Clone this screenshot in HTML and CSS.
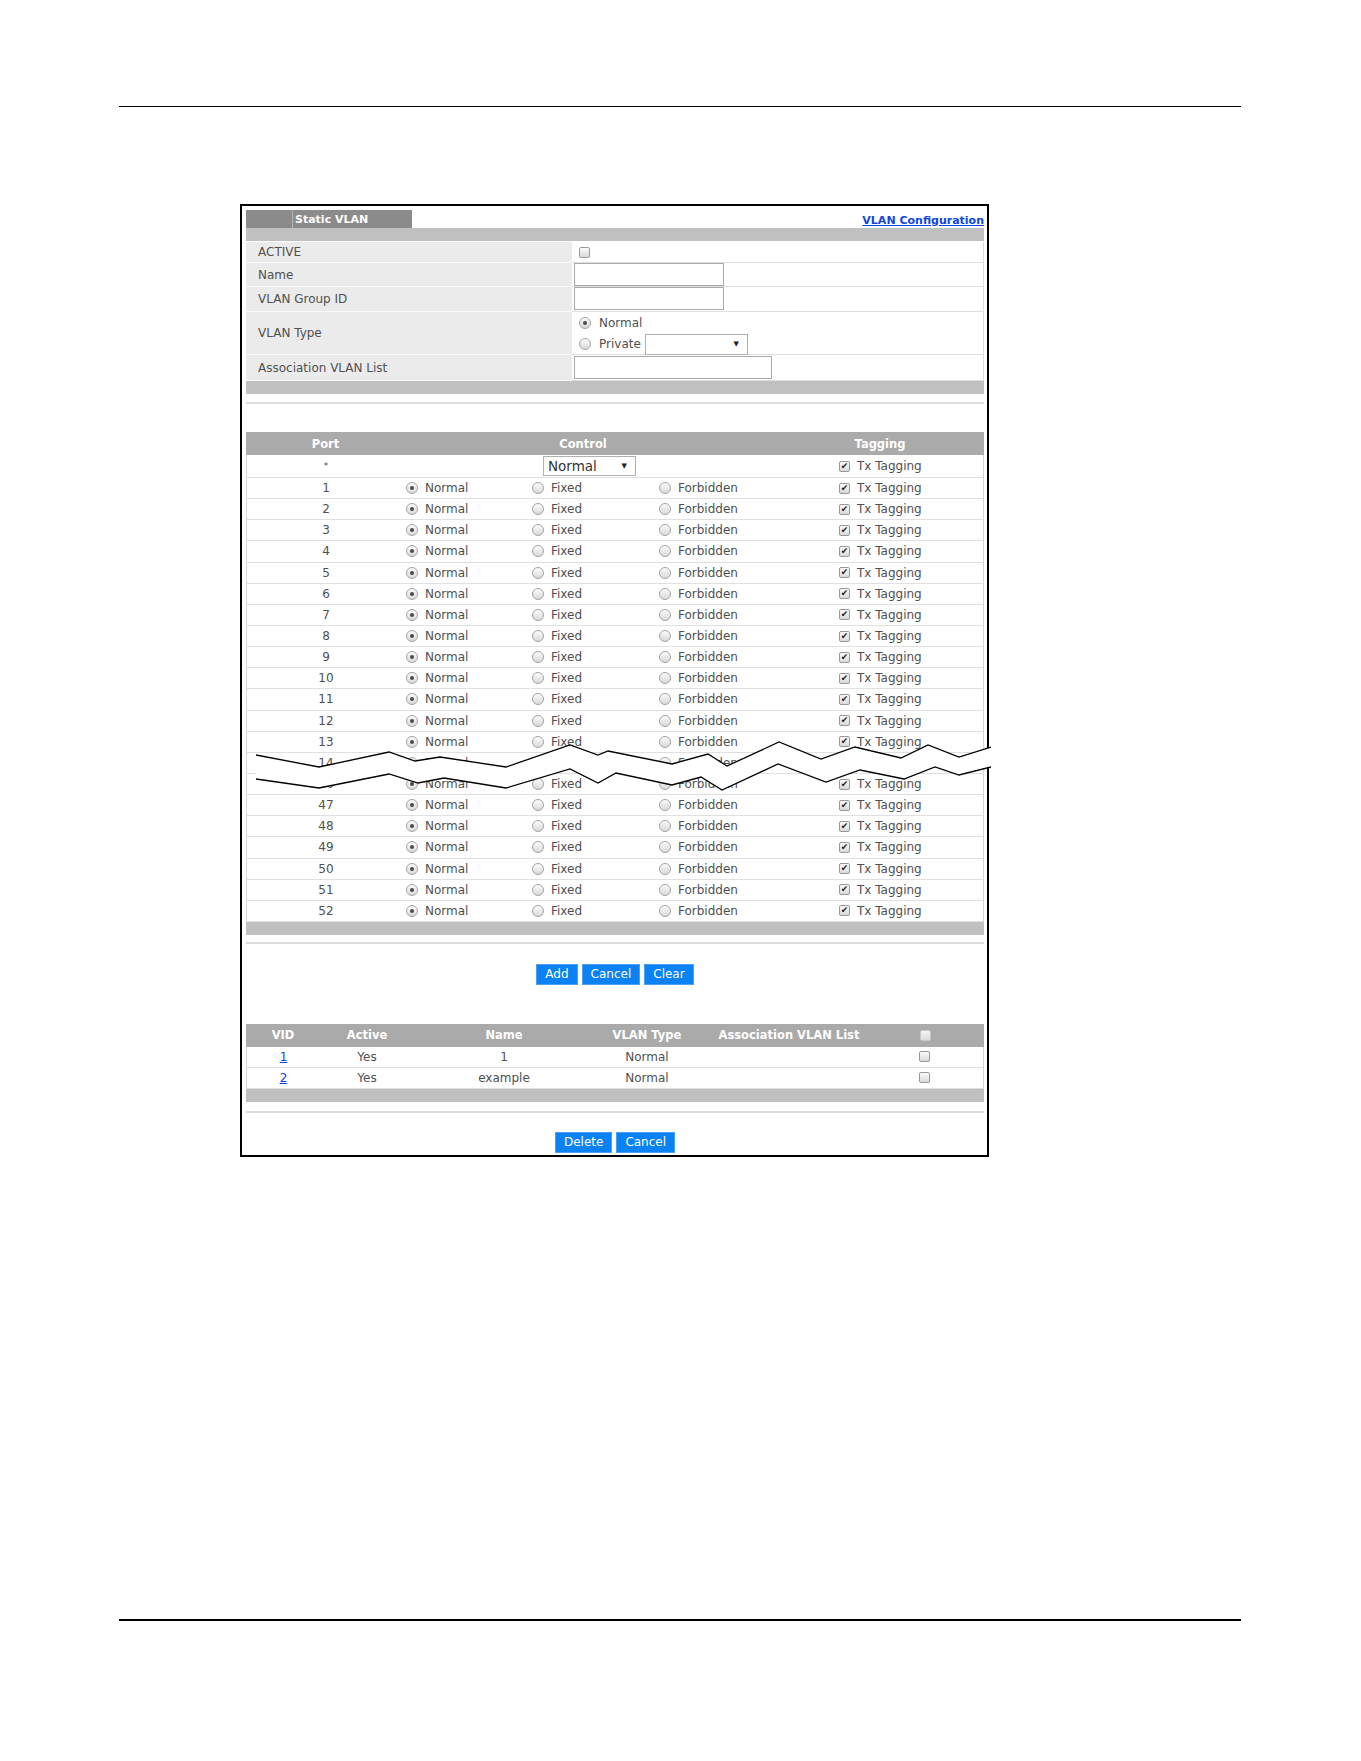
FILE: index.html
```html
<!DOCTYPE html>
<html>
<head>
  <meta charset="utf-8">
  <title>Static VLAN</title>
  <link rel="stylesheet" href="styles.css">
</head>
<body>
  <div class="rule rule-top"></div>

  <div class="panel">
    <div class="title-row">
      <div class="tab"><span>Static VLAN</span></div>
      <a class="link link-bold" href="#">VLAN Configuration</a>
    </div>
    <div class="bar"></div>

    <!-- VLAN settings -->
    <div class="form">
      <div class="lbl">ACTIVE</div>
      <div class="val"><i class="check"></i></div>

      <div class="lbl">Name</div>
      <div class="val top"><input class="text" type="text"></div>

      <div class="lbl">VLAN Group ID</div>
      <div class="val top"><input class="text" type="text"></div>

      <div class="lbl">VLAN Type</div>
      <div class="val types">
        <div class="type-line"><i class="radio on"></i><span>Normal</span></div>
        <div class="type-line"><i class="radio"></i><span>Private</span><span class="select select-private"></span></div>
      </div>

      <div class="lbl">Association VLAN List</div>
      <div class="val"><input class="text text-wide" type="text"></div>
    </div>
    <div class="bar"></div>
    <div class="sep sep-first"></div>

    <!-- Port membership -->
    <div class="ports">
      <div class="phead">
        <span>Port</span>
        <span>Control</span>
        <span class="tag-head">Tagging</span>
      </div>
      <div class="prow star">
        <span class="pnum">*</span><span></span>
        <span><span class="select select-all">Normal</span></span><span></span>
        <label class="opt"><i class="check on"></i>Tx Tagging</label>
      </div>
      <div class="prow"><span class="pnum">1</span><label class="opt"><i class="radio on"></i>Normal</label><label class="opt"><i class="radio"></i>Fixed</label><label class="opt"><i class="radio"></i>Forbidden</label><label class="opt"><i class="check on"></i>Tx Tagging</label></div>
      <div class="prow"><span class="pnum">2</span><label class="opt"><i class="radio on"></i>Normal</label><label class="opt"><i class="radio"></i>Fixed</label><label class="opt"><i class="radio"></i>Forbidden</label><label class="opt"><i class="check on"></i>Tx Tagging</label></div>
      <div class="prow"><span class="pnum">3</span><label class="opt"><i class="radio on"></i>Normal</label><label class="opt"><i class="radio"></i>Fixed</label><label class="opt"><i class="radio"></i>Forbidden</label><label class="opt"><i class="check on"></i>Tx Tagging</label></div>
      <div class="prow"><span class="pnum">4</span><label class="opt"><i class="radio on"></i>Normal</label><label class="opt"><i class="radio"></i>Fixed</label><label class="opt"><i class="radio"></i>Forbidden</label><label class="opt"><i class="check on"></i>Tx Tagging</label></div>
      <div class="prow"><span class="pnum">5</span><label class="opt"><i class="radio on"></i>Normal</label><label class="opt"><i class="radio"></i>Fixed</label><label class="opt"><i class="radio"></i>Forbidden</label><label class="opt"><i class="check on"></i>Tx Tagging</label></div>
      <div class="prow"><span class="pnum">6</span><label class="opt"><i class="radio on"></i>Normal</label><label class="opt"><i class="radio"></i>Fixed</label><label class="opt"><i class="radio"></i>Forbidden</label><label class="opt"><i class="check on"></i>Tx Tagging</label></div>
      <div class="prow"><span class="pnum">7</span><label class="opt"><i class="radio on"></i>Normal</label><label class="opt"><i class="radio"></i>Fixed</label><label class="opt"><i class="radio"></i>Forbidden</label><label class="opt"><i class="check on"></i>Tx Tagging</label></div>
      <div class="prow"><span class="pnum">8</span><label class="opt"><i class="radio on"></i>Normal</label><label class="opt"><i class="radio"></i>Fixed</label><label class="opt"><i class="radio"></i>Forbidden</label><label class="opt"><i class="check on"></i>Tx Tagging</label></div>
      <div class="prow"><span class="pnum">9</span><label class="opt"><i class="radio on"></i>Normal</label><label class="opt"><i class="radio"></i>Fixed</label><label class="opt"><i class="radio"></i>Forbidden</label><label class="opt"><i class="check on"></i>Tx Tagging</label></div>
      <div class="prow"><span class="pnum">10</span><label class="opt"><i class="radio on"></i>Normal</label><label class="opt"><i class="radio"></i>Fixed</label><label class="opt"><i class="radio"></i>Forbidden</label><label class="opt"><i class="check on"></i>Tx Tagging</label></div>
      <div class="prow"><span class="pnum">11</span><label class="opt"><i class="radio on"></i>Normal</label><label class="opt"><i class="radio"></i>Fixed</label><label class="opt"><i class="radio"></i>Forbidden</label><label class="opt"><i class="check on"></i>Tx Tagging</label></div>
      <div class="prow"><span class="pnum">12</span><label class="opt"><i class="radio on"></i>Normal</label><label class="opt"><i class="radio"></i>Fixed</label><label class="opt"><i class="radio"></i>Forbidden</label><label class="opt"><i class="check on"></i>Tx Tagging</label></div>
      <div class="prow"><span class="pnum">13</span><label class="opt"><i class="radio on"></i>Normal</label><label class="opt"><i class="radio"></i>Fixed</label><label class="opt"><i class="radio"></i>Forbidden</label><label class="opt"><i class="check on"></i>Tx Tagging</label></div>
      <div class="prow"><span class="pnum">14</span><label class="opt"><i class="radio on"></i>Normal</label><label class="opt"><i class="radio"></i>Fixed</label><label class="opt"><i class="radio"></i>Forbidden</label><label class="opt"><i class="check on"></i>Tx Tagging</label></div>
      <div class="prow"><span class="pnum">46</span><label class="opt"><i class="radio on"></i>Normal</label><label class="opt"><i class="radio"></i>Fixed</label><label class="opt"><i class="radio"></i>Forbidden</label><label class="opt"><i class="check on"></i>Tx Tagging</label></div>
      <div class="prow"><span class="pnum">47</span><label class="opt"><i class="radio on"></i>Normal</label><label class="opt"><i class="radio"></i>Fixed</label><label class="opt"><i class="radio"></i>Forbidden</label><label class="opt"><i class="check on"></i>Tx Tagging</label></div>
      <div class="prow"><span class="pnum">48</span><label class="opt"><i class="radio on"></i>Normal</label><label class="opt"><i class="radio"></i>Fixed</label><label class="opt"><i class="radio"></i>Forbidden</label><label class="opt"><i class="check on"></i>Tx Tagging</label></div>
      <div class="prow"><span class="pnum">49</span><label class="opt"><i class="radio on"></i>Normal</label><label class="opt"><i class="radio"></i>Fixed</label><label class="opt"><i class="radio"></i>Forbidden</label><label class="opt"><i class="check on"></i>Tx Tagging</label></div>
      <div class="prow"><span class="pnum">50</span><label class="opt"><i class="radio on"></i>Normal</label><label class="opt"><i class="radio"></i>Fixed</label><label class="opt"><i class="radio"></i>Forbidden</label><label class="opt"><i class="check on"></i>Tx Tagging</label></div>
      <div class="prow"><span class="pnum">51</span><label class="opt"><i class="radio on"></i>Normal</label><label class="opt"><i class="radio"></i>Fixed</label><label class="opt"><i class="radio"></i>Forbidden</label><label class="opt"><i class="check on"></i>Tx Tagging</label></div>
      <div class="prow"><span class="pnum">52</span><label class="opt"><i class="radio on"></i>Normal</label><label class="opt"><i class="radio"></i>Fixed</label><label class="opt"><i class="radio"></i>Forbidden</label><label class="opt"><i class="check on"></i>Tx Tagging</label></div>

      <!-- break mark: rows 15-45 left out -->
      <svg class="break" width="735" height="54" viewBox="256 738 735 54">
        <polygon fill="#fff" points="256,754 319,766 389,751 415,760 440,756 506,766 570,744 598,754 608,750 672,763 708,753 727,765 779,741 821,758 855,746 901,757 928,744 959,756 991,746 991,766 959,774 935,766 904,778 860,769 826,781 778,763 722,789 701,776 672,784 616,772 598,782 570,768 506,787 444,777 418,782 389,773 319,787 256,778"/>
        <polyline fill="none" stroke="#000" stroke-width="1.3" points="256,754 319,766 389,751 415,760 440,756 506,766 570,744 598,754 608,750 672,763 708,753 727,765 779,741 821,758 855,746 901,757 928,744 959,756 991,746"/>
        <polyline fill="none" stroke="#000" stroke-width="1.3" points="256,778 319,787 389,773 418,782 444,777 506,787 570,768 598,782 616,772 672,784 701,776 722,789 778,763 826,781 860,769 904,778 935,766 959,774 991,766"/>
      </svg>
    </div>
    <div class="bar"></div>
    <div class="sep sep-mid"></div>

    <div class="buttons">
      <button class="btn">Add</button>
      <button class="btn">Cancel</button>
      <button class="btn">Clear</button>
    </div>

    <!-- Configured VLANs -->
    <div class="list">
      <div class="lhead">
        <span>VID</span>
        <span>Active</span>
        <span>Name</span>
        <span>VLAN Type</span>
        <span>Association VLAN List</span>
        <span class="ck-cell"><i class="check faded"></i></span>
      </div>
      <div class="lrow">
        <span><a class="link" href="#">1</a></span>
        <span>Yes</span>
        <span>1</span>
        <span>Normal</span>
        <span></span>
        <span class="ck-cell"><i class="check"></i></span>
      </div>
      <div class="lrow">
        <span><a class="link" href="#">2</a></span>
        <span>Yes</span>
        <span>example</span>
        <span>Normal</span>
        <span></span>
        <span class="ck-cell"><i class="check"></i></span>
      </div>
    </div>
    <div class="bar"></div>
    <div class="sep sep-last"></div>

    <div class="buttons">
      <button class="btn">Delete</button>
      <button class="btn">Cancel</button>
    </div>
  </div>

  <div class="rule rule-bottom"></div>
</body>
</html>
```

FILE: styles.css
```css
/* Base */
body {
  margin: 0;
  background: #fff;
  font: 12px "DejaVu Sans", Verdana, sans-serif;
  color: #505050;
}

.rule {
  width: 1122px;
  margin-left: 119px;
  background: #000;
}

.rule-top {
  height: 1px;
  margin-top: 106px;
}

.rule-bottom {
  height: 2px;
  margin-top: 462px;
}

/* Frame */
.panel {
  position: relative;
  box-sizing: border-box;
  width: 749px;
  margin: 97px 0 0 240px;
  padding: 4px 3px 2px 4px;
  border: 2px solid #000;
}

.title-row {
  display: flex;
  justify-content: space-between;
  align-items: center;
  height: 18px;
}

.tab {
  box-sizing: border-box;
  width: 166px;
  height: 18px;
  padding-left: 46px;
  background: #8b8b8b;
}

.tab span {
  display: flex;
  align-items: center;
  height: 100%;
  padding-left: 2px;
  border-left: 1px solid #b4b4b4;
  color: #fff;
  font-weight: bold;
  font-size: 11px;
}

.link {
  color: #1046e0;
  text-decoration: underline;
}

.link-bold {
  font-weight: bold;
  font-size: 11px;
  margin-top: 2px;
}

.bar {
  height: 13px;
  background: #c0c0c0;
}

.sep {
  height: 2px;
  background: #dcdcdc;
}

.sep-first { margin: 8px 0 28px; }
.sep-mid { margin: 7px 0 20px; }
.sep-last { margin: 9px 0 19px; }

/* Settings form */
.form {
  display: grid;
  grid-template-columns: 326px 1fr;
  grid-template-rows: 21px 24px 25px 43px 26px;
  margin-top: 1px;
}

.lbl {
  display: flex;
  align-items: center;
  box-sizing: border-box;
  padding-left: 12px;
  background: #ebebeb;
  border-bottom: 1px solid #fafafa;
}

.val {
  display: flex;
  align-items: center;
  box-sizing: border-box;
  padding-left: 2px;
  border-bottom: 1px solid #dedede;
  border-right: 1px solid #dedede;
}

.val.top {
  align-items: flex-start;
}

.val > .check {
  margin-left: 5px;
}

.text {
  box-sizing: border-box;
  width: 150px;
  height: 23px;
  margin: 0;
  border: 1px solid #aaa;
  background: #fff;
  font: inherit;
}

.text-wide {
  width: 198px;
}

.types {
  flex-direction: column;
  align-items: stretch;
}

.type-line {
  display: flex;
  align-items: center;
  height: 22px;
  padding-left: 5px;
}

.type-line + .type-line {
  height: 20px;
}

.type-line .radio {
  margin-right: 8px;
}

.select {
  position: relative;
  display: inline-flex;
  align-items: center;
  box-sizing: border-box;
  padding-left: 4px;
  border: 1px solid #b0b0b0;
  background: #fff;
  color: #333;
}

.select::after {
  content: "\25BC";
  position: absolute;
  right: 8px;
  top: 50%;
  transform: translateY(-50%);
  font-size: 7px;
  color: #222;
}

.select-private {
  width: 103px;
  height: 21px;
  margin-left: 4px;
}

.select-all {
  width: 93px;
  height: 20px;
  margin-left: 12px;
  font-size: 13.5px;
}

/* Form controls drawn as plain shapes */
.radio,
.check {
  display: inline-flex;
  align-items: center;
  justify-content: center;
  flex: none;
  box-sizing: border-box;
  width: 12px;
  height: 12px;
  border: 1px solid #a4a4a4;
  background: linear-gradient(#fbfbfb, #d9d9d9);
}

.radio {
  border-radius: 50%;
}

.radio.on::after {
  content: "";
  width: 4px;
  height: 4px;
  border-radius: 50%;
  background: #4a4a4a;
}

.check {
  width: 11px;
  height: 11px;
  border-radius: 2px;
  border-color: #999;
}

.check.on::after {
  content: "\2714";
  font-size: 9px;
  line-height: 1;
  color: #222;
}

.check.faded {
  border-color: #c8c8c8;
  background: linear-gradient(#f2f2f2, #dedede);
}

/* Port table */
.ports {
  position: relative;
}

.phead,
.lhead {
  display: grid;
  align-items: center;
  height: 23px;
  background: #aaa;
  color: #fff;
  font-weight: bold;
  font-size: 11.5px;
  text-align: center;
}

.phead {
  grid-template-columns: 159px 356px 1fr;
}

.tag-head {
  padding-left: 15px;
}

.prow {
  display: grid;
  grid-template-columns: 158px 126px 127px 180px 1fr;
  align-items: center;
  box-sizing: border-box;
  height: 21.15px;
  border: 1px solid #d6d6d6;
  border-top: 0;
  border-bottom-color: #e0e0e0;
}

.prow.star {
  height: 23px;
}

.pnum {
  text-align: center;
}

.star .pnum {
  font-size: 9px;
}

.opt {
  display: flex;
  align-items: center;
  gap: 7px;
  padding-left: 1px;
}

.break {
  position: absolute;
  left: 10px;
  top: 307px;
}

/* Buttons */
.buttons {
  display: flex;
  justify-content: center;
  gap: 4px;
}

.btn {
  height: 21px;
  margin: 0;
  padding: 0 8px;
  border: 1px solid #4c9ff5;
  background: #0a82f4;
  color: #fff;
  font: 12px "DejaVu Sans", Verdana, sans-serif;
}

/* VLAN list */
.list {
  margin-top: 39px;
}

.lhead {
  grid-template-columns: 74px 94px 180px 106px 178px 1fr;
}

.lrow {
  display: grid;
  grid-template-columns: 73px 94px 180px 106px 178px 1fr;
  align-items: center;
  box-sizing: border-box;
  height: 21px;
  border: 1px solid #d6d6d6;
  border-top: 0;
  border-bottom-color: #e0e0e0;
  text-align: center;
}

.ck-cell {
  display: flex;
  justify-content: center;
  padding-right: 12px;
}
```
